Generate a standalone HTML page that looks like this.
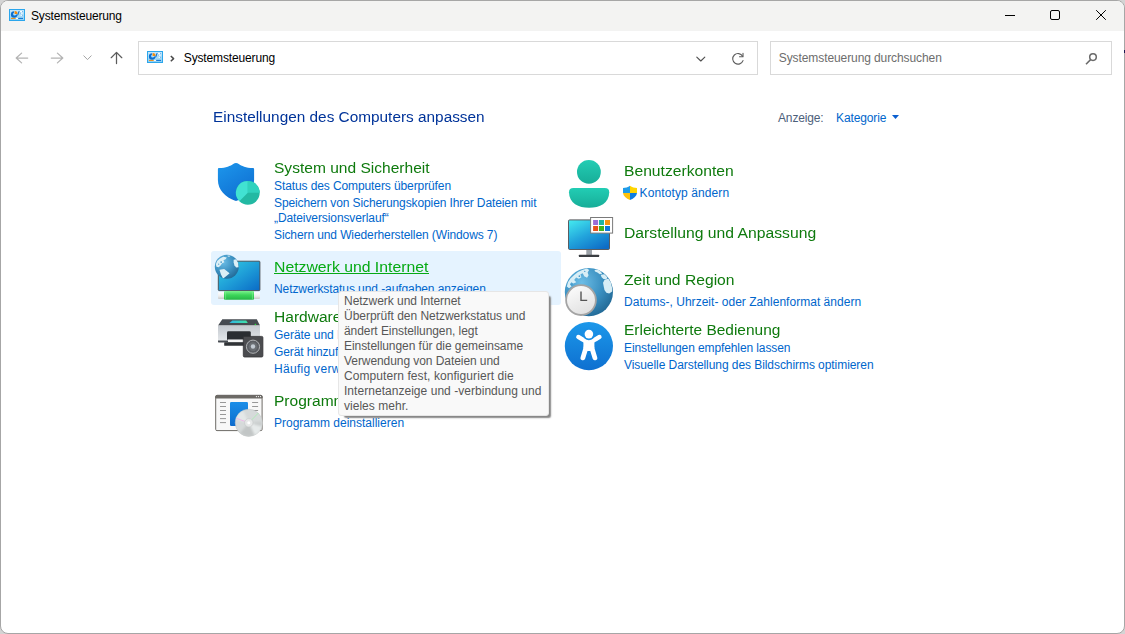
<!DOCTYPE html>
<html lang="de"><head><meta charset="utf-8"><title>Systemsteuerung</title>
<style>
html,body{margin:0;padding:0;}
body{width:1125px;height:634px;overflow:hidden;background:#d4d4d4;font-family:"Liberation Sans",sans-serif;position:relative;}
#win{position:absolute;left:0;top:0;width:1123px;height:632px;border:1px solid #a6a6a6;border-radius:8px;background:#fff;overflow:hidden;}
#tb{position:absolute;left:1px;top:1px;width:1123px;height:30px;background:#f3f3f2;border-radius:7px 7px 0 0;}
.m{position:absolute;white-space:nowrap;}
.box{position:absolute;box-sizing:border-box;border:1px solid #d9d9d9;background:#fff;}
#hl{position:absolute;left:211px;top:251px;width:350px;height:54px;background:#e5f3ff;border-radius:3px;}
#tip{position:absolute;left:338px;top:291px;width:211px;height:125px;box-sizing:border-box;background:#f9f9f9;border:1px solid #e6e6e6;border-radius:3px;z-index:5;}
#tsh{position:absolute;left:345px;top:297px;width:204.8px;height:119.8px;background:#888;border-radius:2px;box-shadow:0 0 1.5px 0.2px #888;z-index:4;}
svg{position:absolute;overflow:visible;}
</style></head><body>
<div id="win"></div>
<div id="tb"></div>
<div class="box" id="abox" style="left:138px;top:41px;width:620px;height:34px;"></div>
<div class="box" id="sbox" style="left:770px;top:41px;width:342px;height:34px;"></div>
<div id="hl"></div>
<div style="position:absolute;left:1124px;top:50px;width:1px;height:3px;background:#1b1752;"></div>
<div id="ul" style="position:absolute;left:274px;top:273px;width:155px;height:1px;background:#06aa14;"></div>
<svg id="ic" width="1125" height="634" viewBox="0 0 1125 634" style="left:0;top:0;z-index:2;">
<defs>
<linearGradient id="gShield" x1="0" y1="0" x2="0.6" y2="1"><stop offset="0" stop-color="#1d97ec"/><stop offset="1" stop-color="#0f6fd2"/></linearGradient>
<linearGradient id="gMon" x1="0" y1="0" x2="1" y2="1"><stop offset="0" stop-color="#34d2e4"/><stop offset="0.5" stop-color="#1f9fd8"/><stop offset="1" stop-color="#0a6ac6"/></linearGradient>
<linearGradient id="gMon2" x1="0.1" y1="0" x2="0.8" y2="1"><stop offset="0" stop-color="#42e6ee"/><stop offset="0.5" stop-color="#22a4dc"/><stop offset="1" stop-color="#0e6cc6"/></linearGradient>
<linearGradient id="gPipe" x1="0" y1="0" x2="0" y2="1"><stop offset="0" stop-color="#7df28e"/><stop offset="0.45" stop-color="#3dd65a"/><stop offset="1" stop-color="#25b545"/></linearGradient>
<linearGradient id="gPipeW" x1="0" y1="0" x2="0" y2="1"><stop offset="0" stop-color="#ffffff"/><stop offset="0.6" stop-color="#ececec"/><stop offset="1" stop-color="#c9c9c9"/></linearGradient>
<radialGradient id="gGlobe" cx="0.35" cy="0.3" r="0.8"><stop offset="0" stop-color="#6cbde6"/><stop offset="0.55" stop-color="#3a8fc0"/><stop offset="1" stop-color="#1f6490"/></radialGradient>
<linearGradient id="gTeal" x1="0" y1="0" x2="0" y2="1"><stop offset="0" stop-color="#22cdb4"/><stop offset="1" stop-color="#17ad98"/></linearGradient>
<linearGradient id="gAcc" x1="0" y1="0" x2="0" y2="1"><stop offset="0" stop-color="#1c98ea"/><stop offset="1" stop-color="#0e70d0"/></linearGradient>
<linearGradient id="gBody" x1="0" y1="0" x2="0" y2="1"><stop offset="0" stop-color="#c4c9cf"/><stop offset="1" stop-color="#e4e7ea"/></linearGradient>
<linearGradient id="gBlue" x1="0" y1="0" x2="0" y2="1"><stop offset="0" stop-color="#1b8ee8"/><stop offset="1" stop-color="#0e6ccd"/></linearGradient>
<linearGradient id="gClock" x1="0" y1="0" x2="0.5" y2="1"><stop offset="0" stop-color="#ffffff"/><stop offset="1" stop-color="#e2e2e2"/></linearGradient>
<linearGradient id="gCp" x1="0" y1="0" x2="0" y2="1"><stop offset="0" stop-color="#c6e8fb"/><stop offset="1" stop-color="#8ccff4"/></linearGradient>
<clipPath id="cGlobe1"><circle cx="226.8" cy="266.8" r="12"/></clipPath>
<clipPath id="cGlobe2"><circle cx="588.9" cy="292.1" r="24.1"/></clipPath>
<linearGradient id="gPanel" x1="0" y1="0" x2="1" y2="0"><stop offset="0" stop-color="#2fb6e4"/><stop offset="1" stop-color="#3fe2a4"/></linearGradient>
<clipPath id="cCD"><circle cx="248.8" cy="422.8" r="13.7"/></clipPath>
<filter id="fB" x="-20%" y="-20%" width="140%" height="140%"><feGaussianBlur stdDeviation="0.9"/></filter>
</defs>

<!-- window controls -->
<g stroke="#000" stroke-width="1" fill="none">
<path d="M1005 15.5H1015"/>
<rect x="1050.5" y="10.5" width="9" height="9" rx="1.5"/>
<path d="M1096.2 10.2L1105.8 19.8M1105.8 10.2L1096.2 19.8"/>
</g>

<!-- nav arrows -->
<g fill="none" stroke-width="1.25" stroke-linecap="round" stroke-linejoin="round">
<path d="M27.7 58H16.3M21.6 53.1L16.2 58L21.6 62.9" stroke="#b4b4b4"/>
<path d="M51.3 58H62.7M57.4 53.1L62.8 58L57.4 62.9" stroke="#b4b4b4"/>
<path d="M83.8 55.8L87.5 59.6L91.2 55.8" stroke="#a6a6a6" stroke-width="1"/>
<path d="M116.5 63.6V52.6M111.2 57.7L116.5 52.4L121.8 57.7" stroke="#5c5c5c"/>
<path d="M170.8 56L173.6 58.6L170.8 61.2" stroke="#4a4a4a" stroke-width="1.5" stroke-linecap="butt"/>
<path d="M696.8 57.2L700.8 61L704.8 57.2" stroke="#505050" stroke-width="1.15"/>
<path d="M742.6 56.2A5.3 5.3 0 1 0 743 60.6" stroke="#5c5c5c" stroke-width="1.1"/>
<path d="M743 53.3V56.8H739.5" stroke="#5c5c5c" stroke-width="1.1"/>
</g>
<!-- search icon -->
<g fill="none" stroke="#6a6a6a" stroke-width="1.5" stroke-linecap="butt">
<circle cx="1093" cy="57.1" r="3.3"/><path d="M1090.6 59.6L1086 64.2"/>
</g>
<!-- Kategorie triangle -->
<path d="M892 115H899L895.5 119Z" fill="#0a5fd0"/>

<!-- control panel icon x2 -->
<g transform="translate(9,9)">
<rect x="0.5" y="0.5" width="15" height="11" fill="url(#gCp)" stroke="#2ba6ec" stroke-width="1"/>
<path d="M5.1 2.3A3.2 3.2 0 1 0 8.3 5.5H5.1Z" fill="#0c6fd0"/>
<circle cx="5.6" cy="5.1" r="1.5" fill="#b4e0f8"/>
<path d="M5.6 1.9A3 3 0 0 1 8.6 4.9H5.6Z" fill="#f28a0c"/>
<path d="M8.2 6.3C9.8 6 9 2.8 10.4 2.3" stroke="#0c6fd0" stroke-width="1.1" fill="none"/>
<path d="M11.1 2.6H13.8M11.1 4.2H13.5M11.6 6.3H13.8" stroke="#ffffff" stroke-width="1"/>
<path d="M13.2 2.6H13.9M11.1 4.2H11.8M13.1 6.3H13.8" stroke="#3a8fe0" stroke-width="1"/>
<path d="M2 9.4H6.8" stroke="#f28a0c" stroke-width="1"/><path d="M6.8 9.4H9.2" stroke="#fff" stroke-width="1"/><path d="M9.2 9.4H14" stroke="#0c6fd0" stroke-width="1"/>
</g>
<g transform="translate(147,51)">
<rect x="0.5" y="0.5" width="15" height="11" fill="url(#gCp)" stroke="#2ba6ec" stroke-width="1"/>
<path d="M5.1 2.3A3.2 3.2 0 1 0 8.3 5.5H5.1Z" fill="#0c6fd0"/>
<circle cx="5.6" cy="5.1" r="1.5" fill="#b4e0f8"/>
<path d="M5.6 1.9A3 3 0 0 1 8.6 4.9H5.6Z" fill="#f28a0c"/>
<path d="M8.2 6.3C9.8 6 9 2.8 10.4 2.3" stroke="#0c6fd0" stroke-width="1.1" fill="none"/>
<path d="M11.1 2.6H13.8M11.1 4.2H13.5M11.6 6.3H13.8" stroke="#ffffff" stroke-width="1"/>
<path d="M13.2 2.6H13.9M11.1 4.2H11.8M13.1 6.3H13.8" stroke="#3a8fe0" stroke-width="1"/>
<path d="M2 9.4H6.8" stroke="#f28a0c" stroke-width="1"/><path d="M6.8 9.4H9.2" stroke="#fff" stroke-width="1"/><path d="M9.2 9.4H14" stroke="#0c6fd0" stroke-width="1"/>
</g>

<!-- 1. System und Sicherheit: shield + pie -->
<path d="M219.2 167.9C226 167.9 230.6 165.7 233.2 163.9C234.9 162.7 237.1 162.7 238.8 163.9C241.4 165.7 246 167.9 252.8 167.9C253.6 167.9 254.1 168.4 254.1 169.2V180C254.1 190 246.5 197.2 236.8 200.8C236.3 201 235.7 201 235.2 200.8C225.5 197.2 217.9 190 217.9 180V169.2C217.9 168.4 218.4 167.9 219.2 167.9Z" fill="url(#gShield)"/>
<circle cx="247.8" cy="192.8" r="11.9" fill="#23b9a3"/>
<path d="M247.8 192.8V180.9A11.9 11.9 0 0 0 239.4 201.2Z" fill="#41e2d2"/>
<path d="M247.8 192.8V180.9A11.9 11.9 0 0 1 259.7 192.8Z" fill="#30d2bd"/>

<!-- 2. Netzwerk: monitor, pipe, globe -->
<rect x="218.3" y="261.2" width="41.6" height="29.4" rx="0.8" fill="url(#gMon)" stroke="#43474d" stroke-width="0.9"/>
<rect x="218" y="292.2" width="42" height="6.8" rx="1" fill="url(#gPipeW)"/>
<rect x="224" y="291" width="30" height="8.8" rx="1" fill="url(#gPipe)"/>
<path d="M225.6 291.2V299.6M252.4 291.2V299.6" stroke="#8af79a" stroke-width="0.5"/>
<circle cx="226.8" cy="266.8" r="12" fill="url(#gGlobe)"/>
<g clip-path="url(#cGlobe1)"><g transform="translate(210,250) scale(0.0946)" fill="#dcEFf6">
<path d="M62 150L75 115L105 90L140 72L178 78L165 98L142 108L152 130L128 140L112 165L92 182L68 176Z"/>
<path d="M100 210L150 200L207 245L186 263L160 286L138 302L116 260Z"/>
<path d="M250 102L277 98L300 140L303 182L276 186L258 160L250 130Z"/>
<path d="M185 58L215 60L205 72L188 70Z"/>
<circle cx="118" cy="128" r="9" fill="#4a9ccc"/><circle cx="92" cy="150" r="6" fill="#4a9ccc"/>
</g></g>

<!-- 3. Hardware: printer + speaker -->
<path d="M222.3 319.2H256.8L260 325.6H218Z" fill="#464b51"/>
<path d="M232.4 320.5H246.2L247.8 323.1H229.4Z" fill="url(#gPanel)"/>
<circle cx="255.4" cy="324.5" r="0.8" fill="#25e03a"/>
<rect x="218" y="325.6" width="42" height="15.2" fill="url(#gBody)"/>
<path d="M218 340.6H244V342.6H219.2Q218 342.6 218 341.4Z" fill="#464b51"/>
<path d="M227 332.6Q227 331.2 228.4 331.2H249.4Q250.8 331.2 250.8 332.6V339.8H227Z" fill="#2b2e32"/>
<rect x="228" y="339.6" width="16" height="2.6" fill="#f4f4f4"/>
<rect x="224.2" y="342.2" width="20" height="3.6" rx="0.6" fill="#303337"/>
<rect x="243.3" y="336.4" width="19.6" height="20.6" rx="1.2" fill="#4b4c4f" stroke="#333436" stroke-width="0.8"/>
<circle cx="253" cy="346.7" r="6.6" fill="#5a5d62" stroke="#b9bbbd" stroke-width="0.9"/>
<circle cx="253" cy="346.7" r="4.4" fill="#6a6e73"/>
<circle cx="253" cy="346.5" r="2.2" fill="#c2cad2"/>

<!-- 4. Programme: window + blue box + CD -->
<rect x="215.7" y="395.4" width="46.4" height="35.2" rx="1.2" fill="#f8f8f8" stroke="#6d6a66" stroke-width="1"/>
<path d="M215.7 398V396.6Q215.7 395.4 216.9 395.4H260.9Q262.1 395.4 262.1 396.6V398Z" fill="#6d6a66" stroke="#6d6a66" stroke-width="1"/>
<g fill="#fff"><circle cx="256.4" cy="396.6" r="0.6"/><circle cx="258.4" cy="396.6" r="0.6"/><circle cx="260.5" cy="396.6" r="0.6"/></g>
<path d="M220 402.5H226M220 406.5H226M220 410.5H226M220 414.5H226M220 418.6H226M220 422.6H226M252.1 402.5H258.1M252.1 406.5H258.1M252.1 410.5H258.1" stroke="#8c8c8c" stroke-width="0.9"/>
<rect x="230" y="402" width="18" height="24" rx="1.2" fill="url(#gBlue)"/>
<circle cx="248.8" cy="422.8" r="13.6" fill="#d6dada" stroke="#bfc3c3" stroke-width="0.5"/>
<g clip-path="url(#cCD)"><g filter="url(#fB)">
<path d="M248.8 422.8L235.6 419.2A13.7 13.7 0 0 1 243 410.4Z" fill="#e4e8e8"/>
<path d="M248.8 422.8L262 426.4A13.7 13.7 0 0 1 254.6 435.2Z" fill="#e6eaea"/>
<path d="M248.8 422.8L254.6 435.2A13.7 13.7 0 0 1 240 433.3Z" fill="#c2c6c6"/>
<path d="M248.8 422.8L262.4 421.6A13.7 13.7 0 0 1 262 426.4Z" fill="#cacece"/>
</g></g>
<path d="M248.8 422.8L258.4 413" stroke="#a6f0b0" stroke-width="0.8"/>
<path d="M248.8 422.8L236.2 418.2" stroke="#f0b0ea" stroke-width="0.8"/>
<circle cx="248.8" cy="422.8" r="4.2" fill="#e6e8e8" stroke="#c4c8c8" stroke-width="0.6"/>
<circle cx="248.8" cy="422.8" r="1.5" fill="#fff"/>

<!-- 5. Benutzerkonten -->
<circle cx="588.9" cy="171.9" r="11.9" fill="url(#gTeal)"/>
<path d="M573.4 188H604.8Q609.2 188 609.2 192.2C609.2 203.2 599.6 207.7 589.1 207.7C578.6 207.7 569 203.2 569 192.2Q569 188 573.4 188Z" fill="url(#gTeal)"/>

<!-- 6. Darstellung -->
<rect x="568.5" y="219.9" width="41" height="29.6" rx="1.2" fill="url(#gMon2)" stroke="#5a5d62" stroke-width="1"/>
<rect x="586.3" y="250" width="5.7" height="5" fill="#9ca2a8"/>
<rect x="578.9" y="254.8" width="20.2" height="2.3" rx="0.5" fill="#3a3d41"/>
<rect x="590.6" y="217.5" width="22" height="15.6" fill="#fff" stroke="#7a7a7a" stroke-width="1"/>
<rect x="593.1" y="220" width="5" height="5" fill="#9b6bd8"/><rect x="599" y="220" width="5" height="5" fill="#1fb4a4"/><rect x="605" y="220" width="5" height="5" fill="#f59412"/>
<rect x="593.1" y="226" width="5" height="5" fill="#e8501a"/><rect x="599" y="226" width="5" height="5" fill="#40b41f"/><rect x="605" y="226" width="5" height="5" fill="#0f78da"/>

<!-- 7. Zeit und Region -->
<circle cx="588.9" cy="292.1" r="24.1" fill="url(#gGlobe)"/>
<g clip-path="url(#cGlobe2)"><g transform="translate(560,262) scale(0.0946)" fill="#d8eef6">
<path d="M72 258L84 215L110 175L150 138L190 105L235 85L285 70L308 84L292 110L302 140L286 166L256 150L240 120L216 130L226 160L200 176L170 165L150 190L172 215L140 226L120 215L105 236L122 260L96 278Z"/>
<path d="M365 85L400 78L430 100L446 125L420 130L395 110L370 100Z"/>
<path d="M430 135L470 130L500 160L490 186L460 180L440 160Z"/>
<path d="M470 190L510 175L536 215L550 270L552 312L520 332L490 326L470 296L461 255L455 220Z"/>
<circle cx="205" cy="150" r="9" fill="#4a9ccc"/><circle cx="125" cy="238" r="11" fill="#4a9ccc"/><circle cx="262" cy="100" r="7" fill="#4a9ccc"/>
</g></g>
<circle cx="581" cy="300.1" r="14.9" fill="url(#gClock)" stroke="#a4a4a4" stroke-width="1.8"/>
<path d="M581 291.4V300.4H587.2" fill="none" stroke="#555" stroke-width="1.4"/>

<!-- 8. Erleichterte Bedienung -->
<circle cx="588.9" cy="346.1" r="24.1" fill="url(#gAcc)"/>
<g fill="none" stroke="#fff" stroke-linecap="round" stroke-linejoin="round">
<path d="M578.3 336.9Q582.5 339.6 585.6 341.2H592.2Q595.3 339.6 599.5 336.9" stroke-width="4.3"/>
<path d="M586.2 347L582.9 357.9M591.6 347L594.9 357.9" stroke-width="4.8"/>
</g>
<path d="M583.4 340H594.4V347.4L593.4 351H584.4L583.4 347.4Z" fill="#fff"/>
<path d="M588.9 350.9L586.6 355.6H591.2Z" fill="#1382de"/>
<circle cx="588.9" cy="334.1" r="5.4" fill="none" stroke="#1a90e6" stroke-width="1.4"/>
<circle cx="588.9" cy="334.1" r="4.3" fill="#fff"/>

<!-- UAC shield -->
<path d="M630 185.8C628 187.4 625.4 188 623 188V193H630Z" fill="#1f9ce8"/>
<path d="M630 185.8C632 187.4 634.6 188 637 188V193H630Z" fill="#ffd500"/>
<path d="M623 193H630V200C626 198.6 623.4 196 623 193Z" fill="#ffc20c"/>
<path d="M637 193H630V200C634 198.6 636.6 196 637 193Z" fill="#0f7de0"/>
</svg>

<span class="m" id="t_title" style="left:31.00px;top:8.00px;font-size:12px;line-height:16px;color:#000;letter-spacing:-0.171px;transform-origin:0 0;transform:scaleX(1.0000);">Systemsteuerung</span>
<span class="m" id="t_addr" style="left:183.80px;top:50.00px;font-size:12px;line-height:16px;color:#000;letter-spacing:-0.143px;transform-origin:0 0;transform:scaleX(1.0000);">Systemsteuerung</span>
<span class="m" id="t_search" style="left:778.80px;top:50.00px;font-size:12px;line-height:16px;color:#6d6d6d;letter-spacing:-0.092px;transform-origin:0 0;transform:scaleX(1.0000);">Systemsteuerung durchsuchen</span>
<span class="m" id="t_head" style="left:213.00px;top:107.00px;font-size:15.5px;line-height:19.5px;color:#003399;letter-spacing:0.000px;transform-origin:0 0;transform:scaleX(0.9914);">Einstellungen des Computers anpassen</span>
<span class="m" id="t_anz" style="left:778.00px;top:110.00px;font-size:12px;line-height:16px;color:#4c607a;letter-spacing:-0.143px;transform-origin:0 0;transform:scaleX(1.0000);">Anzeige:</span>
<span class="m" id="t_kat" style="left:836.00px;top:110.00px;font-size:12px;line-height:16px;color:#0066cc;letter-spacing:-0.125px;transform-origin:0 0;transform:scaleX(1.0000);">Kategorie</span>
<span class="m" id="c1" style="left:274.00px;top:158.00px;font-size:15.5px;line-height:19.5px;color:#0e7a0d;letter-spacing:0.000px;transform-origin:0 0;transform:scaleX(1.0031);">System und Sicherheit</span>
<span class="m" id="c1a" style="left:274.00px;top:178.00px;font-size:12px;line-height:16px;color:#0066cc;letter-spacing:-0.100px;transform-origin:0 0;transform:scaleX(1.0000);">Status des Computers überprüfen</span>
<span class="m" id="c1b" style="left:274.00px;top:195.00px;font-size:12px;line-height:16px;color:#0066cc;letter-spacing:-0.106px;transform-origin:0 0;transform:scaleX(1.0000);">Speichern von Sicherungskopien Ihrer Dateien mit</span>
<span class="m" id="c1c" style="left:274.00px;top:210.00px;font-size:12px;line-height:16px;color:#0066cc;letter-spacing:-0.095px;transform-origin:0 0;transform:scaleX(1.0000);">„Dateiversionsverlauf“</span>
<span class="m" id="c1d" style="left:274.00px;top:227.00px;font-size:12px;line-height:16px;color:#0066cc;letter-spacing:-0.103px;transform-origin:0 0;transform:scaleX(1.0000);">Sichern und Wiederherstellen (Windows 7)</span>
<span class="m" id="c2" style="left:274.00px;top:257.00px;font-size:15.5px;line-height:19.5px;color:#06aa14;letter-spacing:0.000px;transform-origin:0 0;transform:scaleX(1.0182);">Netzwerk und Internet</span>
<span class="m" id="c2a" style="left:274.00px;top:281.00px;font-size:12px;line-height:16px;color:#0066cc;letter-spacing:-0.083px;transform-origin:0 0;transform:scaleX(1.0000);">Netzwerkstatus und -aufgaben anzeigen</span>
<span class="m" id="c3" style="left:274.00px;top:307.00px;font-size:15.5px;line-height:19.5px;color:#0e7a0d;letter-spacing:0.000px;transform-origin:0 0;transform:scaleX(1.0031);">Hardware und Sound</span>
<span class="m" id="c3a" style="left:274.00px;top:327.00px;font-size:12px;line-height:16px;color:#0066cc;letter-spacing:-0.030px;transform-origin:0 0;transform:scaleX(1.0000);">Geräte und Drucker anzeigen</span>
<span class="m" id="c3b" style="left:274.00px;top:344.00px;font-size:12px;line-height:16px;color:#0066cc;letter-spacing:-0.100px;transform-origin:0 0;transform:scaleX(1.0000);">Gerät hinzufügen</span>
<span class="m" id="c3c" style="left:274.00px;top:361.00px;font-size:12px;line-height:16px;color:#0066cc;letter-spacing:0.300px;transform-origin:0 0;transform:scaleX(1.0000);">Häufig verw<span style="letter-spacing:-0.4px">endete Mobilitätseinstellungen ändern</span></span>
<span class="m" id="c4" style="left:274.00px;top:391.00px;font-size:15.5px;line-height:19.5px;color:#0e7a0d;letter-spacing:0.000px;transform-origin:0 0;transform:scaleX(1.0031);">Programme</span>
<span class="m" id="c4a" style="left:274.00px;top:415.00px;font-size:12px;line-height:16px;color:#0066cc;letter-spacing:-0.000px;transform-origin:0 0;transform:scaleX(1.0000);">Programm deinstallieren</span>
<span class="m" id="d1" style="left:624.00px;top:161.00px;font-size:15.5px;line-height:19.5px;color:#0e7a0d;letter-spacing:0.000px;transform-origin:0 0;transform:scaleX(1.0103);">Benutzerkonten</span>
<span class="m" id="d1a" style="left:639.60px;top:185.00px;font-size:12px;line-height:16px;color:#0066cc;letter-spacing:0.100px;transform-origin:0 0;transform:scaleX(1.0000);">Kontotyp ändern</span>
<span class="m" id="d2" style="left:624.00px;top:223.00px;font-size:15.5px;line-height:19.5px;color:#0e7a0d;letter-spacing:0.000px;transform-origin:0 0;transform:scaleX(1.0137);">Darstellung und Anpassung</span>
<span class="m" id="d3" style="left:624.00px;top:270.00px;font-size:15.5px;line-height:19.5px;color:#0e7a0d;letter-spacing:0.000px;transform-origin:0 0;transform:scaleX(1.0099);">Zeit und Region</span>
<span class="m" id="d3a" style="left:624.00px;top:294.00px;font-size:12px;line-height:16px;color:#0066cc;letter-spacing:0.024px;transform-origin:0 0;transform:scaleX(1.0000);">Datums-, Uhrzeit- oder Zahlenformat ändern</span>
<span class="m" id="d4" style="left:624.00px;top:320.00px;font-size:15.5px;line-height:19.5px;color:#0e7a0d;letter-spacing:0.000px;transform-origin:0 0;transform:scaleX(0.9968);">Erleichterte Bedienung</span>
<span class="m" id="d4a" style="left:624.00px;top:340.00px;font-size:12px;line-height:16px;color:#0066cc;letter-spacing:-0.103px;transform-origin:0 0;transform:scaleX(1.0000);">Einstellungen empfehlen lassen</span>
<span class="m" id="d4b" style="left:624.00px;top:357.00px;font-size:12px;line-height:16px;color:#0066cc;letter-spacing:-0.065px;transform-origin:0 0;transform:scaleX(1.0000);">Visuelle Darstellung des Bildschirms optimieren</span>
<div id="tsh"></div>
<div id="tip"></div>
<span class="m" id="tt1" style="left:344.00px;top:293.00px;font-size:12px;line-height:16px;color:#575757;letter-spacing:-0.035px;transform-origin:0 0;transform:scaleX(1.0000);z-index:6;">Netzwerk und Internet</span>
<span class="m" id="tt2" style="left:344.00px;top:308.00px;font-size:12px;line-height:16px;color:#575757;letter-spacing:-0.023px;transform-origin:0 0;transform:scaleX(1.0000);z-index:6;">Überprüft den Netzwerkstatus und</span>
<span class="m" id="tt3" style="left:344.00px;top:323.00px;font-size:12px;line-height:16px;color:#575757;letter-spacing:-0.068px;transform-origin:0 0;transform:scaleX(1.0000);z-index:6;">ändert Einstellungen, legt</span>
<span class="m" id="tt4" style="left:344.00px;top:338.00px;font-size:12px;line-height:16px;color:#575757;letter-spacing:-0.055px;transform-origin:0 0;transform:scaleX(1.0000);z-index:6;">Einstellungen für die gemeinsame</span>
<span class="m" id="tt5" style="left:344.00px;top:353.00px;font-size:12px;line-height:16px;color:#575757;letter-spacing:-0.068px;transform-origin:0 0;transform:scaleX(1.0000);z-index:6;">Verwendung von Dateien und</span>
<span class="m" id="tt6" style="left:344.00px;top:368.00px;font-size:12px;line-height:16px;color:#575757;letter-spacing:0.074px;transform-origin:0 0;transform:scaleX(1.0000);z-index:6;">Computern fest, konfiguriert die</span>
<span class="m" id="tt7" style="left:344.00px;top:383.00px;font-size:12px;line-height:16px;color:#575757;letter-spacing:0.038px;transform-origin:0 0;transform:scaleX(1.0000);z-index:6;">Internetanzeige und -verbindung und</span>
<span class="m" id="tt8" style="left:344.00px;top:398.00px;font-size:12px;line-height:16px;color:#575757;letter-spacing:0.027px;transform-origin:0 0;transform:scaleX(1.0000);z-index:6;">vieles mehr.</span>
</body></html>
